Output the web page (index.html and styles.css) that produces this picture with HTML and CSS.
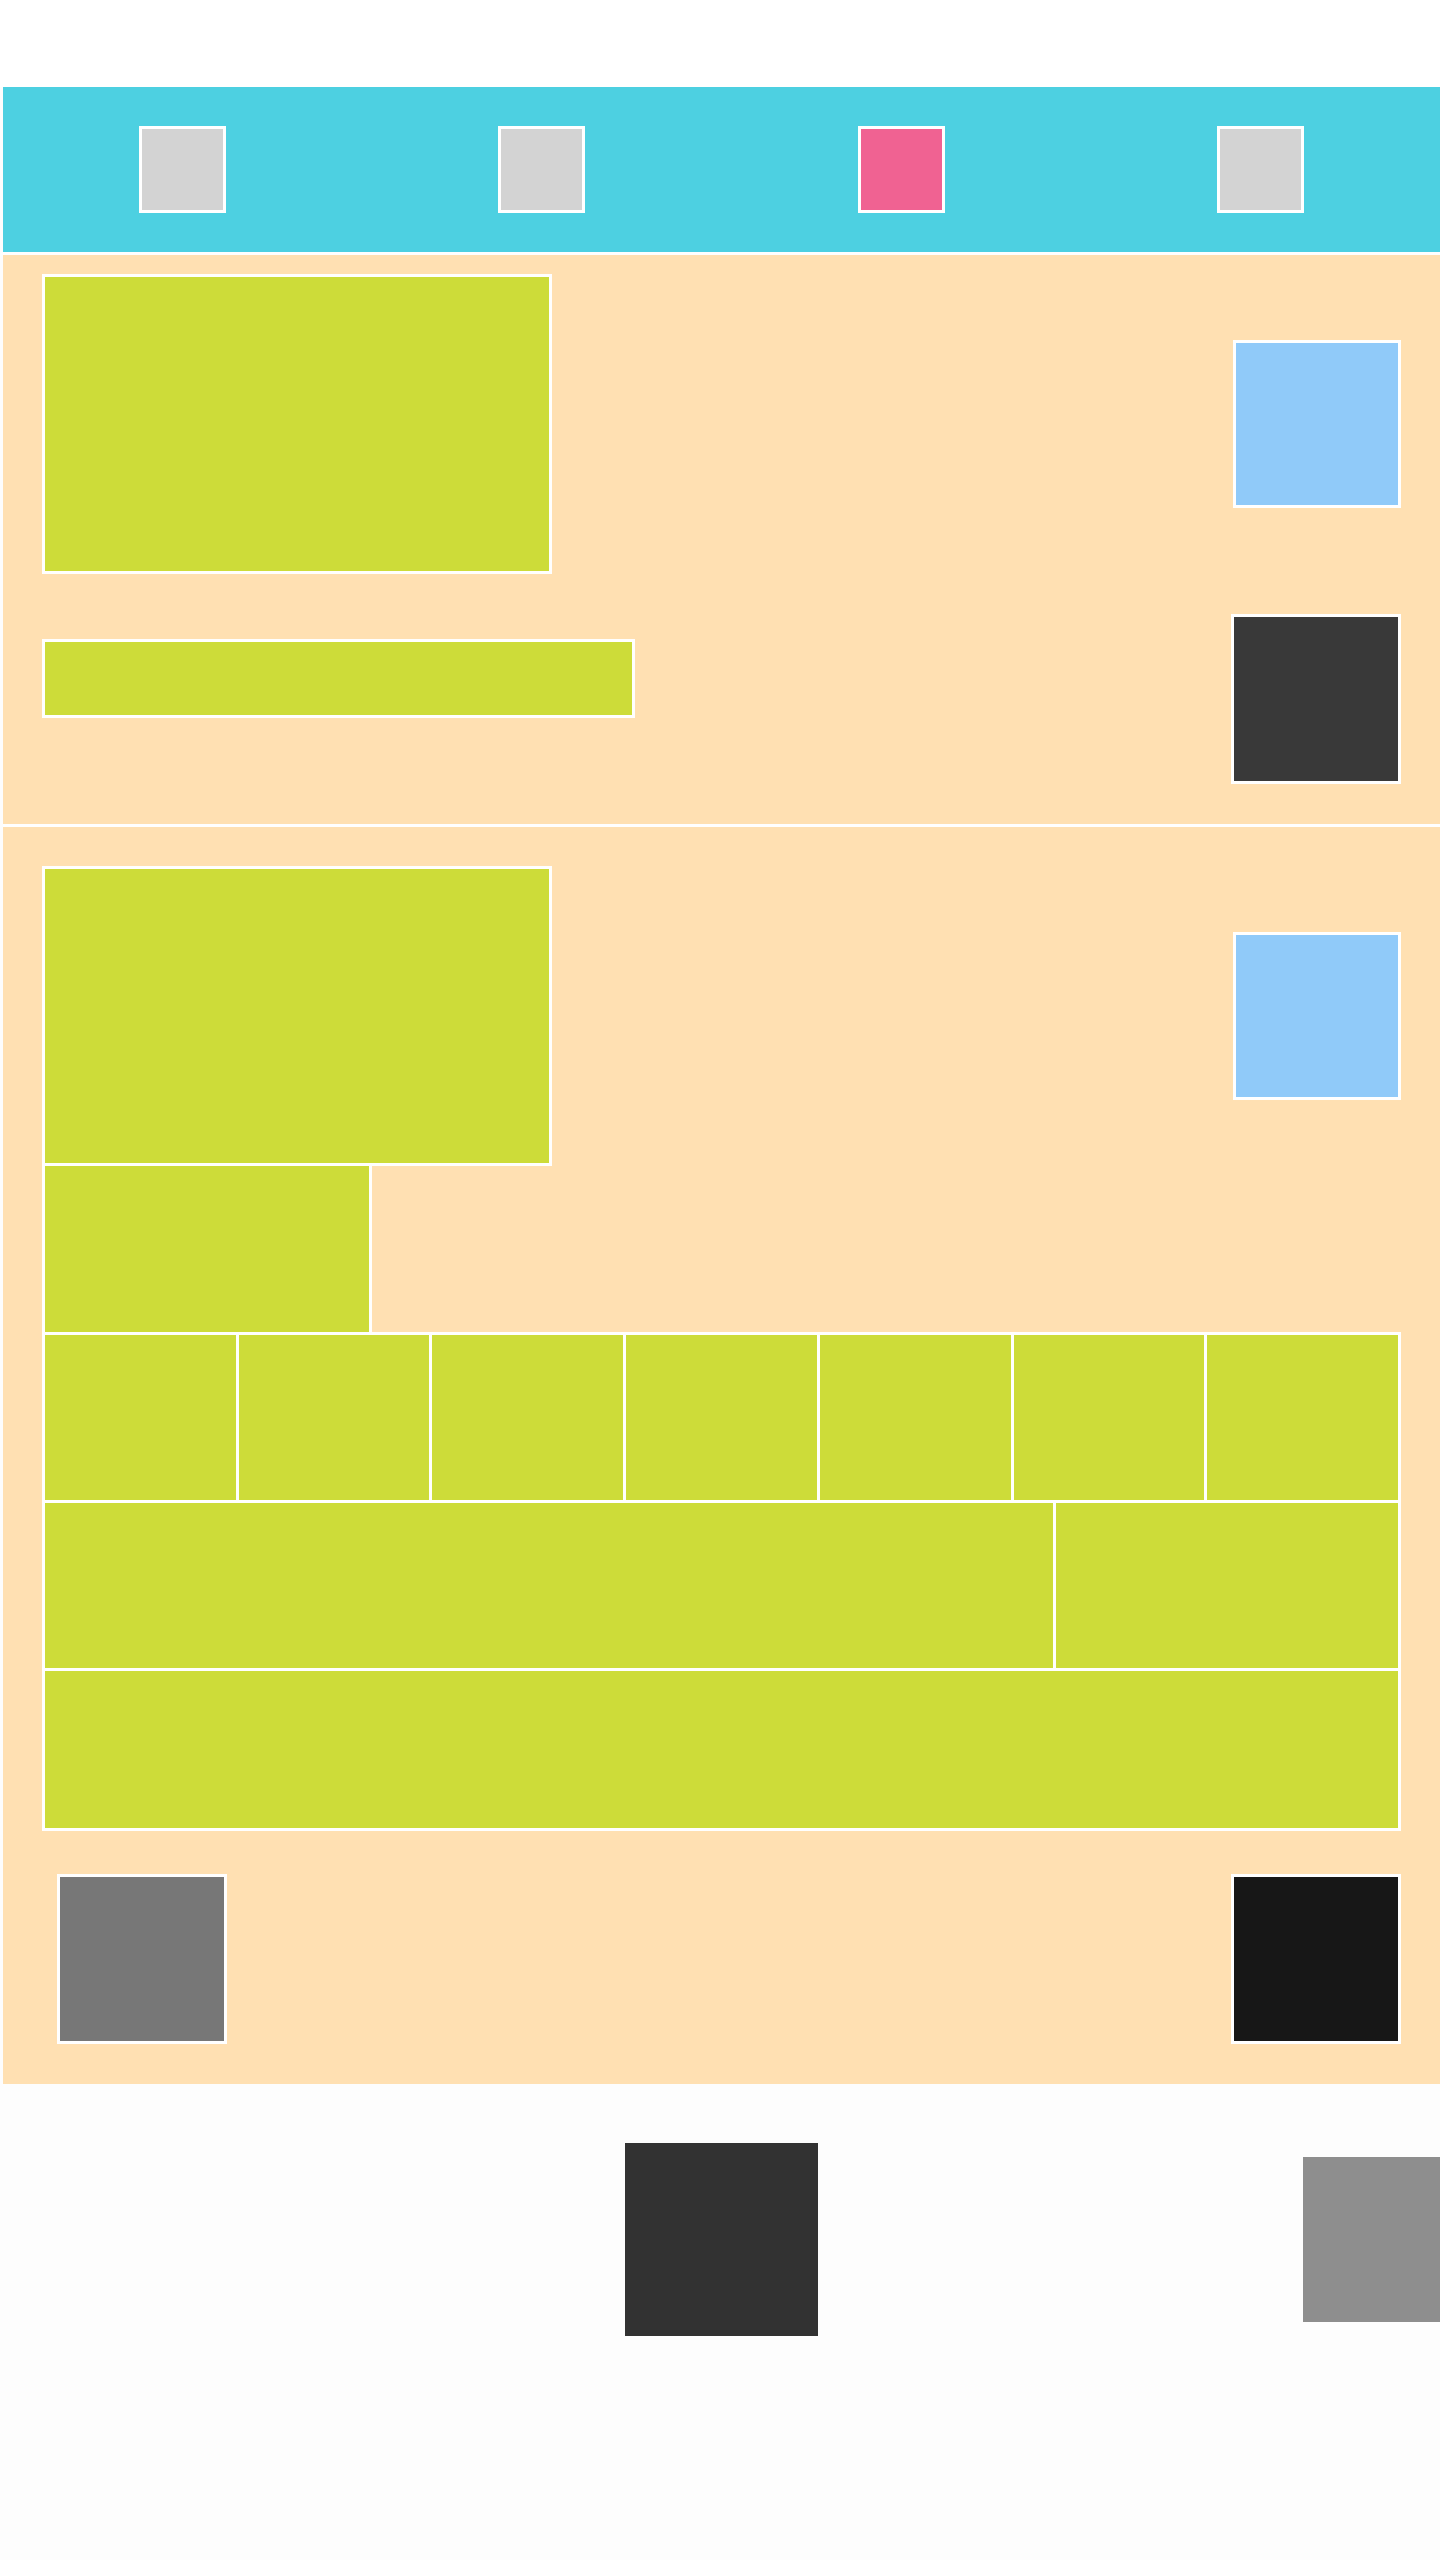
FILE: index.html
```html
<!DOCTYPE html>
<html lang="en">
<head>
    <meta charset="UTF-8">
    <meta name="viewport" content="width=device-width, initial-scale=1.0">
    <title>Layout Wireframe</title>
    <link rel="stylesheet" href="styles.css">
</head>
<body>
    <div class="page">
        <!-- top navigation -->
        <nav class="topbar">
            <span class="icon"></span>
            <span class="icon"></span>
            <span class="icon active"></span>
            <span class="icon"></span>
        </nav>

        <!-- first card -->
        <section class="panel panel-first">
            <div class="row row-center">
                <div class="box hero"></div>
                <div class="thumb"></div>
            </div>
            <div class="row row-second">
                <div class="box bar"></div>
                <div class="square dark"></div>
            </div>
        </section>

        <!-- second card -->
        <section class="panel panel-second">
            <div class="row row-center">
                <div class="box hero"></div>
                <div class="thumb"></div>
            </div>
            <div class="stack">
                <div class="box tag"></div>
                <div class="cells week">
                    <div class="box"></div>
                    <div class="box"></div>
                    <div class="box"></div>
                    <div class="box"></div>
                    <div class="box"></div>
                    <div class="box"></div>
                    <div class="box"></div>
                </div>
                <div class="cells split">
                    <div class="box wide"></div>
                    <div class="box"></div>
                </div>
                <div class="cells">
                    <div class="box full"></div>
                </div>
            </div>
            <div class="row actions">
                <div class="square grey"></div>
                <div class="square black"></div>
            </div>
        </section>

        <!-- floating controls -->
        <footer class="dock">
            <div></div>
            <div class="dock-main"></div>
            <div class="dock-side"></div>
        </footer>
    </div>
</body>
</html>
```

FILE: styles.css
```css
body {
    margin: 0;
    padding: 0;
    background: #fdfdfd;
    font-family: 'Liberation Sans', Arial, sans-serif;
}
.page {
    padding-top: 87px;
    padding-left: 3px;
    background: linear-gradient(#ffffff, #ffffff) top / 100% 87px no-repeat;
    min-height: 2473px;
    overflow: hidden;
}

/* top bar */
.topbar {
    height: 165px;
    background: #4dd0e1;
    border-bottom: 3px solid #fff;
    display: flex;
    justify-content: space-around;
    align-items: center;
}
.icon {
    width: 81px;
    height: 81px;
    border: 3px solid #fff;
    background: #d3d3d3;
}
.icon.active {
    background: #f06292;
}

/* panels */
.panel {
    background: #ffe0b2;
    border-bottom: 3px solid #fff;
    padding: 0 39px;
}
.panel-first {
    padding-top: 19px;
    padding-bottom: 40px;
}
.panel-second {
    padding-top: 39px;
    padding-bottom: 40px;
    border-bottom: none;
}
.row {
    display: flex;
    justify-content: space-between;
}
.row-center {
    align-items: center;
}
.row-second {
    margin-top: 40px;
    align-items: flex-start;
}

.box {
    background: #cddc39;
    border: 3px solid #fff;
}
.hero {
    width: 504px;
    height: 294px;
}
.bar {
    width: 587px;
    height: 73px;
    margin-top: 25px;
}
.thumb {
    width: 162px;
    height: 162px;
    border: 3px solid #fff;
    background: #90caf9;
}
.square {
    width: 164px;
    height: 164px;
    border: 3px solid #fff;
}
.dark {
    background: #393939;
}
.grey {
    background: #777777;
    margin-left: 15px;
}
.black {
    background: #171717;
}

/* stacked grid of cells, borders overlap */
.stack > * {
    margin-top: -3px;
}
.tag {
    width: 324px;
    height: 166px;
}
.cells {
    display: flex;
}
.cells .box {
    flex: 1;
    height: 165px;
}
.cells .box + .box {
    margin-left: -3px;
}
.split .wide {
    flex: none;
    width: 1008px;
}
.cells .full {
    height: 157px;
}
.actions {
    margin-top: 43px;
}

/* bottom dock */
.dock {
    display: grid;
    grid-template-columns: 1fr auto 1fr;
    align-items: center;
    padding-top: 59px;
    background: #fdfdfd;
    margin-left: -3px;
    padding-left: 3px;
}
.dock-main {
    width: 193px;
    height: 193px;
    background: #323232;
}
.dock-side {
    justify-self: end;
    width: 137px;
    height: 165px;
    background: #8e8e8e;
}
```
